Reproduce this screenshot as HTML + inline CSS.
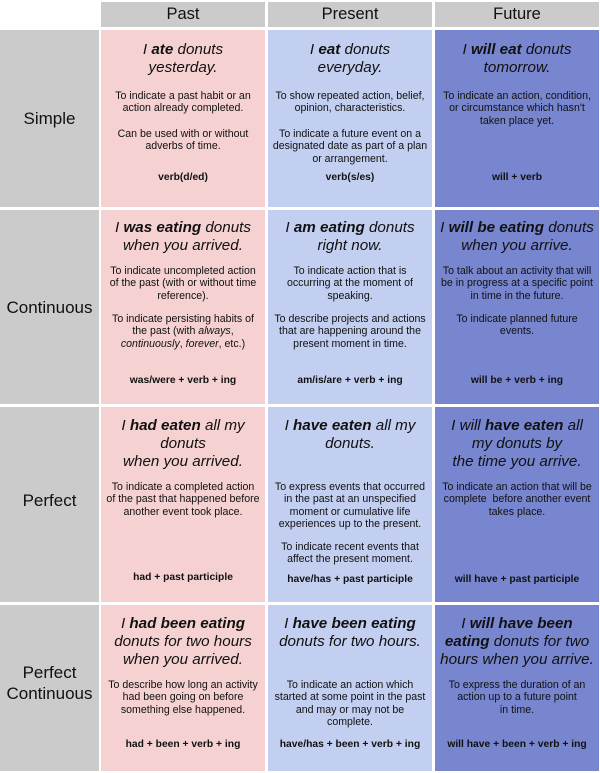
<!DOCTYPE html>
<html><head><meta charset="utf-8"><style>
body{margin:0;width:600px;height:773px;background:#fff;position:relative;overflow:hidden;font-family:"Liberation Sans",Arial,sans-serif;color:#111}
.b{position:absolute}
.g{background:#cbcbcb}.p{background:#f5d2d1}.s{background:#c2cff0}.f{background:#7885cf}
.t{position:absolute;text-align:center;font-size:10.6px;line-height:12.4px;white-space:nowrap}
.h{position:absolute;text-align:center;font-size:15.2px;line-height:18px;font-style:italic;white-space:nowrap}
.h b{font-weight:bold}
.fm{position:absolute;text-align:center;font-size:10.3px;font-weight:bold;line-height:12px;white-space:nowrap}
.lab{position:absolute;left:0;width:99px;text-align:center;font-size:17px;line-height:21px}
.hd{position:absolute;top:2px;height:25px;line-height:25px;text-align:center;font-size:16.5px}
.c1{left:101px;width:164px}.c2{left:268px;width:164px}.c3{left:435px;width:164px}
</style></head><body>
<div class="b g" style="left:101px;top:2px;width:164px;height:25px"></div>
<div class="b g" style="left:268px;top:2px;width:164px;height:25px"></div>
<div class="b g" style="left:435px;top:2px;width:164px;height:25px"></div>
<div class="hd c1">Past</div><div class="hd c2">Present</div><div class="hd c3">Future</div>

<div class="b g" style="left:0;top:30px;width:99px;height:177px"></div>
<div class="b p" style="left:101px;top:30px;width:164px;height:177px"></div>
<div class="b s" style="left:268px;top:30px;width:164px;height:177px"></div>
<div class="b f" style="left:435px;top:30px;width:164px;height:177px"></div>

<div class="b g" style="left:0;top:210px;width:99px;height:194px"></div>
<div class="b p" style="left:101px;top:210px;width:164px;height:194px"></div>
<div class="b s" style="left:268px;top:210px;width:164px;height:194px"></div>
<div class="b f" style="left:435px;top:210px;width:164px;height:194px"></div>

<div class="b g" style="left:0;top:407px;width:99px;height:195px"></div>
<div class="b p" style="left:101px;top:407px;width:164px;height:195px"></div>
<div class="b s" style="left:268px;top:407px;width:164px;height:195px"></div>
<div class="b f" style="left:435px;top:407px;width:164px;height:195px"></div>

<div class="b g" style="left:0;top:605px;width:99px;height:166px"></div>
<div class="b p" style="left:101px;top:605px;width:164px;height:166px"></div>
<div class="b s" style="left:268px;top:605px;width:164px;height:166px"></div>
<div class="b f" style="left:435px;top:605px;width:164px;height:166px"></div>

<div class="lab" style="top:108px">Simple</div>
<div class="lab" style="top:297px">Continuous</div>
<div class="lab" style="top:490px">Perfect</div>
<div class="lab" style="top:662px">Perfect<br>Continuous</div>

<!-- Row 1 -->
<div class="h c1" style="top:41px">I <b>ate</b> donuts<br>yesterday.</div>
<div class="h c2" style="top:41px">I <b>eat</b> donuts<br>everyday.</div>
<div class="h c3" style="top:41px">I <b>will eat</b> donuts<br>tomorrow.</div>
<div class="t c1" style="top:90px">To indicate a past habit or an<br>action already completed.</div>
<div class="t c1" style="top:128px">Can be used with or without<br>adverbs of time.</div>
<div class="t c2" style="top:90px">To show repeated action, belief,<br>opinion, characteristics.</div>
<div class="t c2" style="top:128px">To indicate a future event on a<br>designated date as part of a plan<br>or arrangement.</div>
<div class="t c3" style="top:90px">To indicate an action, condition,<br>or circumstance which hasn't<br>taken place yet.</div>
<div class="fm c1" style="top:172px">verb(d/ed)</div>
<div class="fm c2" style="top:172px">verb(s/es)</div>
<div class="fm c3" style="top:172px">will + verb</div>

<!-- Row 2 -->
<div class="h c1" style="top:219px">I <b>was eating</b> donuts<br>when you arrived.</div>
<div class="h c2" style="top:219px">I <b>am eating</b> donuts<br>right now.</div>
<div class="h c3" style="top:219px">I <b>will be eating</b> donuts<br>when you arrive.</div>
<div class="t c1" style="top:265px">To indicate uncompleted action<br>of the past (with or without time<br>reference).</div>
<div class="t c1" style="top:313px">To indicate persisting habits of<br>the past (with <i>always</i>,<br><i>continuously</i>, <i>forever</i>, etc.)</div>
<div class="t c2" style="top:265px">To indicate action that is<br>occurring at the moment of<br>speaking.</div>
<div class="t c2" style="top:313px">To describe projects and actions<br>that are happening around the<br>present moment in time.</div>
<div class="t c3" style="top:265px">To talk about an activity that will<br>be in progress at a specific point<br>in time in the future.</div>
<div class="t c3" style="top:313px">To indicate planned future<br>events.</div>
<div class="fm c1" style="top:375px">was/were + verb + ing</div>
<div class="fm c2" style="top:375px">am/is/are + verb + ing</div>
<div class="fm c3" style="top:375px">will be + verb + ing</div>

<!-- Row 3 -->
<div class="h c1" style="top:417px">I <b>had eaten</b> all my<br>donuts<br>when you arrived.</div>
<div class="h c2" style="top:417px">I <b>have eaten</b> all my<br>donuts.</div>
<div class="h c3" style="top:417px">I will <b>have eaten</b> all<br>my donuts by<br>the time you arrive.</div>
<div class="t c1" style="top:481px">To indicate a completed action<br>of the past that happened before<br>another event took place.</div>
<div class="t c2" style="top:481px">To express events that occurred<br>in the past at an unspecified<br>moment or cumulative life<br>experiences up to the present.</div>
<div class="t c2" style="top:541px">To indicate recent events that<br>affect the present moment.</div>
<div class="t c3" style="top:481px">To indicate an action that will be<br>complete &nbsp;before another event<br>takes place.</div>
<div class="fm c1" style="top:572px">had + past participle</div>
<div class="fm c2" style="top:574px">have/has + past participle</div>
<div class="fm c3" style="top:574px">will have + past participle</div>

<!-- Row 4 -->
<div class="h c1" style="top:615px">I <b>had been eating</b><br>donuts for two hours<br>when you arrived.</div>
<div class="h c2" style="top:615px">I <b>have been eating</b><br>donuts for two hours.</div>
<div class="h c3" style="top:615px">I <b>will have been<br>eating</b> donuts for two<br>hours when you arrive.</div>
<div class="t c1" style="top:679px">To describe how long an activity<br>had been going on before<br>something else happened.</div>
<div class="t c2" style="top:679px">To indicate an action which<br>started at some point in the past<br>and may or may not be<br>complete.</div>
<div class="t c3" style="top:679px">To express the duration of an<br>action up to a future point<br>in time.</div>
<div class="fm c1" style="top:739px">had + been + verb + ing</div>
<div class="fm c2" style="top:739px">have/has + been + verb + ing</div>
<div class="fm c3" style="top:739px">will have + been + verb + ing</div>
</body></html>
